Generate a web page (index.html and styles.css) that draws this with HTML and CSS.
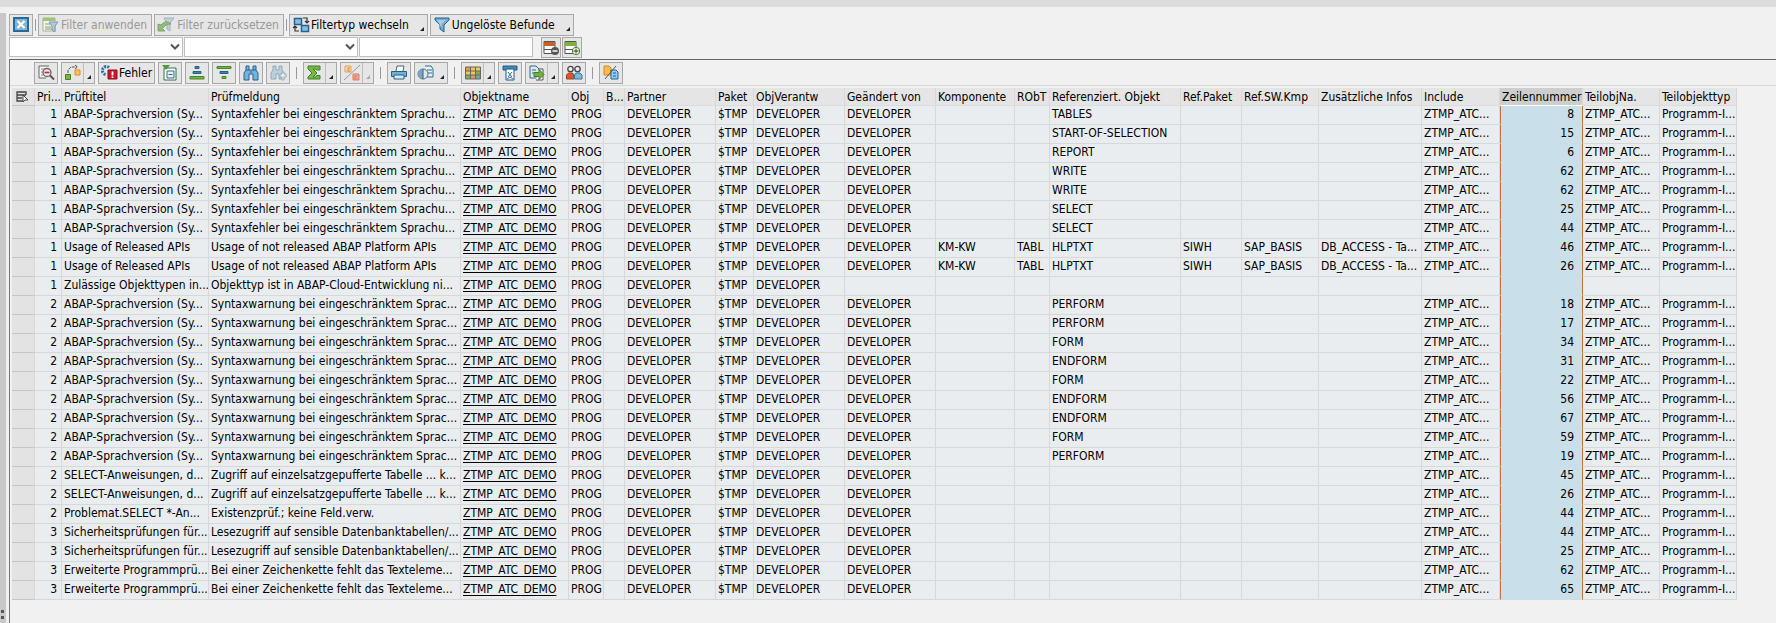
FILE: index.html
```html
<!DOCTYPE html>
<html lang="de">
<head>
<meta charset="utf-8">
<title>ATC-Befunde</title>
<link rel="stylesheet" href="styles.css">
</head>
<body>
<div class="topbar"></div>
<div class="workspace">
<div class="splitter"><span class="grip"></span><span class="grip"></span></div>
<main class="content">
<div class="filterbar">
<button class="btn" type="button" aria-label="Schließen"><svg class="icon" viewBox="0 0 18 18"><path fill="#2b6a98" d="M1 1h16v15H1z"/><path fill="#83b4d4" d="M3 3h12v11H3z"/><path d="M5.500 5l7 7M12.500 5l-7 7" stroke="#fff" stroke-width="2.200"/></svg></button>
<span class="sep"></span>
<button class="btn" type="button" disabled><svg class="icon" viewBox="0 0 18 18"><path d="M2 2h12v13H2z" fill="#f3f6e9" stroke="#a4b58b"/><path d="M2 2h12v3H2z" fill="#9fc472"/><path d="M4 8h6M4 11h6M4 13h8" stroke="#8b9781"/><path d="M8 6h9l-3 4v6l-3-2v-4z" fill="#aecbdc" stroke="#739db6"/></svg>Filter anwenden</button>
<button class="btn" type="button" disabled><svg class="icon" viewBox="0 0 18 18"><path d="M7 2h10l-4 5v8l-3-2V7z" fill="#bed2dc" stroke="#9bb3bf"/><path d="M1 8v7h7l-2.500-2.500Q8 8 14 8 9 3 4 9z" fill="#8fbd79" stroke="#7ea76c"/></svg>Filter zurücksetzen</button>
<span class="sep"></span>
<button class="btn btn-drop" type="button"><svg class="icon" viewBox="0 0 18 18"><path d="M2.500 2.500h7v6h-7zM9.500 9.500h7v6h-7z" fill="#8bbde0" stroke="#22638f" stroke-width="1.500"/><path d="M11 2h4v5M13 5l2 2 2-2M7 15H3v-5M1 12l2-2 2 2" fill="none" stroke="#333" stroke-width="1.200"/></svg>Filtertyp wechseln<i class="corner"></i></button>
<button class="btn btn-drop" type="button"><svg class="icon" viewBox="0 0 18 18"><path d="M2 2h14v2l-5 5v7l-4-3V9L2 4z" fill="#75a9cd" stroke="#22638f"/><path d="M4 4h9L8.500 8v4z" fill="#a9cde5"/></svg>Ungelöste Befunde<i class="corner"></i></button>
</div>
<form class="criteria">
<label class="combo"><select aria-label="Filterfeld"><option></option></select><svg class="chevron" viewBox="0 0 10 8"><path d="M1 1.500l4 4 4-4" fill="none" stroke="#555" stroke-width="2"/></svg></label>
<label class="combo"><select aria-label="Operator"><option></option></select><svg class="chevron" viewBox="0 0 10 8"><path d="M1 1.500l4 4 4-4" fill="none" stroke="#555" stroke-width="2"/></svg></label>
<input class="value" type="text" aria-label="Filterwert">
<span class="rowactions">
<button class="btn" type="button" aria-label="Zeile löschen"><svg class="icon" viewBox="0 0 18 18"><path d="M2 2.500h11v12H2zM2 10.500h11" fill="#fff" stroke="#555"/><path d="M2 3h11v4H2z" fill="#c2622a"/><circle cx="13" cy="12" r="4" fill="#555"/><path d="M10.500 12h5" stroke="#fff" stroke-width="1.500"/></svg></button>
<button class="btn" type="button" aria-label="Zeile einfügen"><svg class="icon" viewBox="0 0 18 18"><path d="M2 2.500h11v12H2zM2 10.500h11" fill="#fff" stroke="#555"/><path d="M2 3h11v4H2z" fill="#7bb33b"/><circle cx="13" cy="12" r="3.700" fill="#fff" stroke="#4d7a35"/><path d="M10.500 12h5M13 9.500v5" stroke="#4d7a35" stroke-width="1.300"/></svg></button>
</span>
</form>
<section class="grid">
<div class="toolbar">
<button class="btn" type="button" aria-label="Details"><svg class="icon" viewBox="0 0 18 18"><path d="M12 2H2v12h7" fill="#f5f5f5" stroke="#666"/><path d="M4 5h6M4 8h2M4 11h2" stroke="#888"/><circle cx="10" cy="8.500" r="4" fill="#f8e6e6" stroke="#666" stroke-width="1.300"/><path d="M7.500 8.500h5" stroke="#c52c35" stroke-width="1.700"/><path d="M13 11.500l4 4" stroke="#555" stroke-width="2"/></svg></button>
<button class="btn btn-split" type="button" aria-label="Navigation"><svg class="icon" viewBox="0 0 18 18"><path d="M1.500 10.500h5v5h-5z" fill="#79b540" stroke="#4c7e28"/><path d="M11 6h5v5h-5z" fill="#ffc15b" stroke="#e18a1f"/><path d="M4 9V6l3-3h6M11 1l2.500 2L11 5" fill="none" stroke="#555" stroke-dasharray="3 1"/></svg><i class="corner"></i></button>
<button class="btn btn-error" type="button"><svg class="icon" viewBox="0 0 18 18"><path d="M8 3.500a4 4 0 10-3 7" fill="none" stroke="#2870a0" stroke-width="3" stroke-dasharray="2 1"/><path d="M7 6h9v9H7z" fill="#cf1728" stroke="#8f0d1d"/><path d="M11.500 7.500v4M11.500 12.500v1.500" stroke="#fff" stroke-width="1.800"/></svg>Fehler</button>
<button class="btn" type="button" aria-label="Auswahl"><svg class="icon" viewBox="0 0 18 18"><path d="M3 4h12v12H3z" fill="#fff" stroke="#327047"/><path d="M6 7h7v7H6zM7.500 10.500h4" fill="#e8f0f4" stroke="#326b88"/><path d="M1 1h8L5 6z" fill="#54943c"/></svg></button>
<button class="btn" type="button" aria-label="Aufsteigend sortieren"><svg class="icon" viewBox="0 0 18 18"><path d="M7 2.500h4v2H7z" fill="#4083ad" stroke="#286387"/><path d="M5 7.500h8v2H5z" fill="#4083ad" stroke="#286387"/><path d="M2 12.500h14v2.500H2z" fill="#76b342" stroke="#4b872c"/></svg></button>
<button class="btn" type="button" aria-label="Absteigend sortieren"><svg class="icon" viewBox="0 0 18 18"><path d="M2 2.500h14v2H2z" fill="#76b342" stroke="#4b872c"/><path d="M5 7.500h8v2H5z" fill="#4083ad" stroke="#286387"/><path d="M7 12.500h4v2H7z" fill="#76b342" stroke="#4b872c"/></svg></button>
<button class="btn" type="button" aria-label="Suchen"><svg class="icon" viewBox="0 0 18 18"><path d="M4 2h3v4h4V2h3v4l2 3v7h-5v-6H7v6H2V9l2-3z" fill="#78b2dc" stroke="#23628f"/><path d="M4 6h3M11 6h3M8 8h2" stroke="#23628f"/></svg></button>
<button class="btn" type="button" disabled aria-label="Weitersuchen"><svg class="icon" viewBox="0 0 18 18"><path d="M4 2h3v4h3V2h3v4l2 3v6h-5v-5H7v5H2V9l2-3z" fill="#bad0df" stroke="#91a9b7"/><path d="M11 10h2V8h2v2h2v3h-2v3h-2v-3h-2z" fill="#e4edf2" stroke="#9aacb5"/></svg></button>
<span class="sep"></span>
<button class="btn btn-split" type="button" aria-label="Summe"><svg class="icon" viewBox="0 0 18 18"><path d="M2 2h12v4h-3.500L10 5H7l4 4-4 4h3l.500-1.500H14V15H2v-2l4-4-4-4z" fill="#77b843" stroke="#3f7c2d"/></svg><i class="corner"></i></button>
<button class="btn btn-split" type="button" disabled aria-label="Zwischensumme"><svg class="icon" viewBox="0 0 18 18"><path d="M2 2h6v6H2z" fill="#f8d6a2" stroke="#dfa75b"/><path d="M10 10h6v6h-6z" fill="#f0a38c" stroke="#d98269"/><path d="M7 4H5v3h2M14 12h-2v3h2" fill="none" stroke="#d98269"/><path d="M1 16L17 1" stroke="#999"/></svg><i class="corner"></i></button>
<span class="sep"></span>
<button class="btn" type="button" aria-label="Drucken"><svg class="icon" viewBox="0 0 18 18"><path d="M6 7l1-5h7l-1 5" fill="#fff" stroke="#4d6573"/><path d="M1.500 7.500h15v5h-15z" fill="#78aed0" stroke="#23628f"/><path d="M4 11h10v4H4z" fill="#d8e9f2" stroke="#23628f"/></svg></button>
<button class="btn btn-wide" type="button" aria-label="Sichten"><svg class="icon" viewBox="0 0 18 18"><path d="M8 2h6l2 3v8h-6" fill="#e7f1f5" stroke="#2c6a8f"/><path d="M10 6h5M11 9h4" stroke="#2c6a8f"/><circle cx="6" cy="10" r="5" fill="#d8e9f2" stroke="#557083"/><path d="M6 5a5 5 0 000 10z" fill="#77a7c4"/><path d="M6 5v10" stroke="#35617d"/></svg><i class="corner"></i></button>
<span class="sep"></span>
<button class="btn btn-split" type="button" aria-label="Layout"><svg class="icon" viewBox="0 0 18 18"><path d="M1.500 3h15v12h-15z" fill="#efc75a"/><path d="M2 3h5v4H2zM7 11h5v4H7z" fill="#e09a4e"/><path d="M2 11h5v4H2zM12 7h5v4h-5z" fill="#7fae52"/><path d="M12 11h5v4h-5z" fill="#6aa4c7"/><path d="M1.500 3h15v12h-15zM1.500 7h15M1.500 11h15M6.500 3v12M11.500 3v12" fill="none" stroke="#666"/></svg><i class="corner"></i></button>
<button class="btn" type="button" aria-label="Export"><svg class="icon" viewBox="0 0 18 18"><path d="M2 2h14v4H2z" fill="#428cb8" stroke="#1f5b81"/><path d="M5 5h8v11H5z" fill="#fff" stroke="#1f5b81"/><path d="M7 8l4 5M11 8l-4 5M6 15l3-2 3 2" fill="none" stroke="#2b6d96"/></svg></button>
<button class="btn btn-split" type="button" aria-label="Exportieren"><svg class="icon" viewBox="0 0 18 18"><path d="M2 2h6l3 3v9H2z" fill="#d8e9f2" stroke="#2c6a8f"/><path d="M4 6h4M4 9h3" stroke="#2c6a8f"/><path d="M11 5h4v11H8" fill="#fff" stroke="#555"/><path d="M6 8.500h5V5.500l5 5-5 5v-3H6z" fill="#72b23c" stroke="#467d29"/></svg><i class="corner"></i></button>
<button class="btn" type="button" aria-label="Ansprechpartner"><svg class="icon" viewBox="0 0 18 18"><circle cx="5.500" cy="5" r="2.700" fill="#eee" stroke="#444" stroke-width="1.300"/><circle cx="12.500" cy="5" r="2.700" fill="#eee" stroke="#444" stroke-width="1.300"/><path d="M1.500 15V11l2-2h4l1.500 2v4z" fill="#d85834" stroke="#a73d20"/><path d="M9.500 15V11l1.500-2h4l2 2v4z" fill="#82b7da" stroke="#32769e"/></svg></button>
<span class="sep"></span>
<button class="btn" type="button" aria-label="Vergleichen"><svg class="icon" viewBox="0 0 18 18"><path d="M2 2h5l2 2v7H2z" fill="#fbba49" stroke="#dc8518"/><path d="M9 6h5l2 2v7H9z" fill="#9bcbe8" stroke="#196798"/><path d="M11 9h3M11 12h3" stroke="#196798"/><path d="M3 15L14 2" stroke="#555"/></svg></button>
</div>
<table class="findings">
<colgroup><col class="w-mark"><col class="w-prio"><col class="w-title"><col class="w-message"><col class="w-object"><col class="w-type"><col class="w-flag"><col class="w-user"><col class="w-package"><col class="w-user"><col class="w-user"><col class="w-component"><col class="w-type"><col class="w-refobject"><col class="w-refpackage"><col class="w-part"><col class="w-info"><col class="w-include"><col class="w-line"><col class="w-part"><col class="w-part"></colgroup>
<thead><tr><th class="mark" scope="col"><svg class="pick" viewBox="0 0 14 14"><path d="M10 5V2H1v9h6M1 5h9M1 8h5" fill="none" stroke="#444" stroke-width="1.300"/><path d="M7 5l5 5H9l-2 2z" fill="#fff" stroke="#444"/></svg></th><th scope="col">Pri...</th><th scope="col">Prüftitel</th><th scope="col">Prüfmeldung</th><th scope="col">Objektname</th><th scope="col">Obj</th><th scope="col">B...</th><th scope="col">Partner</th><th scope="col">Paket</th><th scope="col">ObjVerantw</th><th scope="col">Geändert von</th><th scope="col">Komponente</th><th scope="col">RObT</th><th scope="col">Referenziert. Objekt</th><th scope="col">Ref.Paket</th><th scope="col">Ref.SW.Kmp</th><th scope="col">Zusätzliche Infos</th><th scope="col">Include</th><th class="sorted" scope="col">Zeilennummer</th><th scope="col">TeilobjNa.</th><th scope="col">Teilobjekttyp</th></tr></thead>
<tbody id="rows"></tbody>
</table>
</section>
</main>
</div>
<script src="findings.js"></script>
</body>
</html>
```
FILE: styles.css
```css
* { box-sizing: border-box; }

body {
  margin: 0;
  min-height: 100vh;
  display: flex;
  flex-direction: column;
  background: #f1f1f1;
  color: #000;
  font-family: "DejaVu Sans Condensed", "Noto Sans", sans-serif;
  font-size: 12px;
  line-height: 18px;
}

.topbar { height: 7px; background: #dcdcdc; }

.workspace { flex: 1; display: flex; padding-top: 6px; }

.splitter {
  width: 6px;
  margin-right: 3px;
  padding: 0 0 4px 1px;
  background: #c8c8c8;
  display: flex;
  flex-direction: column;
  justify-content: flex-end;
  align-items: flex-start;
  gap: 3px;
}

.grip { width: 3px; height: 3px; background: #555; }

.content { flex: 1; min-width: 0; display: flex; flex-direction: column; }

.filterbar { display: flex; gap: 2px; padding-top: 1px; }

.btn {
  position: relative;
  display: inline-flex;
  align-items: center;
  justify-content: flex-start;
  gap: 2px;
  min-width: 24px;
  height: 22px;
  padding: 0 4px 0 2px;
  border: 1px solid #a8a8a8;
  background: #e6e6e6;
  color: #000;
  font: inherit;
  white-space: nowrap;
}

.btn:disabled { color: #999; }
.btn[aria-label] { padding: 0 2px; }
.icon { width: 18px; height: 18px; flex: none; }

.btn.btn-drop { gap: 1px; padding-right: 18px; }
.btn.btn-error { gap: 0; padding: 0 2px; }
.btn.btn-split, .btn.btn-wide { width: 34px; padding-right: 13px; }

.corner {
  position: absolute;
  right: 3px;
  bottom: 4px;
  border-left: 4px solid transparent;
  border-bottom: 4px solid #222;
}

.btn-split::after {
  content: "";
  position: absolute;
  top: 0;
  bottom: 0;
  right: 10px;
  border-left: 1px solid #bdbdbd;
}

.btn:disabled .corner { border-bottom-color: #aaa; }

.sep { width: 1px; height: 12px; align-self: center; background: #999; }

.criteria { display: flex; gap: 1px; margin: 0; padding-top: 1px; height: 23px; }

.combo { position: relative; display: flex; }

.combo select, .value {
  width: 174px;
  height: 20px;
  padding: 0 4px;
  border: 1px solid #bfbfbf;
  border-radius: 0;
  background: #fff;
  font: inherit;
  appearance: none;
}

.chevron { position: absolute; right: 3px; top: 6px; width: 10px; height: 8px; pointer-events: none; }

.rowactions { display: flex; gap: 1px; margin-left: 7px; }
.rowactions .btn { min-width: 20px; height: 21px; padding: 0; }

.grid { flex: 1; border-top: 1px solid #666; border-left: 1px solid #777; }

.toolbar {
  display: flex;
  gap: 3px;
  padding: 2px 0 1px 24px;
  border-bottom: 1px solid #d8d8d8;
}

.toolbar .sep { margin: 0 3px; }

.findings {
  width: 0;
  margin: 2px 0 0 2px;
  border-collapse: separate;
  border-spacing: 0;
  table-layout: fixed;
}

.findings th, .findings td {
  height: 19px;
  padding: 0 0 2px 2px;
  border-right: 1px solid #d6d8d9;
  border-bottom: 1px solid #d6d8d9;
  background: #e9edf0;
  font-weight: 400;
  line-height: 16px;
  text-align: left;
  white-space: nowrap;
  overflow: hidden;
}

.findings th { height: 18px; padding-bottom: 0; border-bottom-color: #dcdcdc; background: #e5e5e5; }
.findings .mark { background: #e3e3e3; border-bottom-color: #c6c6c6; }
.findings .prio { padding-right: 4px; text-align: right; }
.findings a { color: inherit; text-decoration: underline; text-underline-offset: 2px; }
.findings .line {
  padding-right: 8px;
  border-left: 1px solid #c9733c;
  border-right: 1px solid #c9733c;
  border-bottom-color: #c9dfe9;
  background: #c9dfe9;
  text-align: right;
}
.findings .sorted { background: #cecece; border-bottom-color: #fff; }

.pick { display: block; width: 14px; height: 14px; margin-left: 2px; }

.w-mark { width: 23px; }
.w-prio { width: 27px; }
.w-title { width: 147px; }
.w-message { width: 252px; }
.w-object { width: 108px; }
.w-type { width: 35px; }
.w-flag { width: 21px; }
.w-user { width: 91px; }
.w-package { width: 38px; }
.w-component { width: 79px; }
.w-refobject { width: 131px; }
.w-refpackage { width: 61px; }
.w-part { width: 77px; }
.w-info { width: 103px; }
.w-include { width: 78px; }
.w-line { width: 83px; }
```
FILE: findings.js
```js
const SYNTAX_ERROR = ["1", "ABAP-Sprachversion (Sy...", "Syntaxfehler bei eingeschränktem Sprachu..."];
const SYNTAX_WARNING = ["2", "ABAP-Sprachversion (Sy...", "Syntaxwarnung bei eingeschränktem Sprac..."];
const RELEASED_API = ["1", "Usage of Released APIs", "Usage of not released ABAP Platform APIs"];
const OBJECT_TYPE = ["1", "Zulässige Objekttypen in...", "Objekttyp ist in ABAP-Cloud-Entwicklung ni..."];
const BUFFERED = ["2", "SELECT-Anweisungen, d...", "Zugriff auf einzelsatzgepufferte Tabelle ... k..."];
const SELECT_ALL = ["2", "Problemat.SELECT *-An...", "Existenzprüf.; keine Feld.verw."];
const SECURITY = ["3", "Sicherheitsprüfungen für...", "Lesezugriff auf sensible Datenbanktabellen/..."];
const EXTENDED = ["3", "Erweiterte Programmprü...", "Bei einer Zeichenkette fehlt das Texteleme..."];

// [check, referenced object, line number]
const findings = [
  [SYNTAX_ERROR, "TABLES", 8],
  [SYNTAX_ERROR, "START-OF-SELECTION", 15],
  [SYNTAX_ERROR, "REPORT", 6],
  [SYNTAX_ERROR, "WRITE", 62],
  [SYNTAX_ERROR, "WRITE", 62],
  [SYNTAX_ERROR, "SELECT", 25],
  [SYNTAX_ERROR, "SELECT", 44],
  [RELEASED_API, "HLPTXT", 46],
  [RELEASED_API, "HLPTXT", 26],
  [OBJECT_TYPE, "", null],
  [SYNTAX_WARNING, "PERFORM", 18],
  [SYNTAX_WARNING, "PERFORM", 17],
  [SYNTAX_WARNING, "FORM", 34],
  [SYNTAX_WARNING, "ENDFORM", 31],
  [SYNTAX_WARNING, "FORM", 22],
  [SYNTAX_WARNING, "ENDFORM", 56],
  [SYNTAX_WARNING, "ENDFORM", 67],
  [SYNTAX_WARNING, "FORM", 59],
  [SYNTAX_WARNING, "PERFORM", 19],
  [BUFFERED, "", 45],
  [BUFFERED, "", 26],
  [SELECT_ALL, "", 44],
  [SECURITY, "", 44],
  [SECURITY, "", 25],
  [EXTENDED, "", 62],
  [EXTENDED, "", 65],
];

const cell = (text, cls) => `<td${cls ? ` class="${cls}"` : ""}>${text}</td>`;

document.getElementById("rows").innerHTML = findings.map(([check, ref, line]) => {
  const api = check === RELEASED_API;
  const located = line !== null;
  return "<tr>" + [
    cell("", "mark"),
    cell(check[0], "prio"),
    cell(check[1]),
    cell(check[2]),
    cell('<a href="#ZTMP_ATC_DEMO">ZTMP_ATC_DEMO</a>'),
    cell("PROG"),
    cell(""),
    cell("DEVELOPER"),
    cell("$TMP"),
    cell("DEVELOPER"),
    cell(located ? "DEVELOPER" : ""),
    cell(api ? "KM-KW" : ""),
    cell(api ? "TABL" : ""),
    cell(ref),
    cell(api ? "SIWH" : ""),
    cell(api ? "SAP_BASIS" : ""),
    cell(api ? "DB_ACCESS - Ta..." : ""),
    cell(located ? "ZTMP_ATC..." : ""),
    cell(located ? line : "", "line"),
    cell(located ? "ZTMP_ATC..." : ""),
    cell(located ? "Programm-I..." : ""),
  ].join("") + "</tr>";
}).join("");
```
